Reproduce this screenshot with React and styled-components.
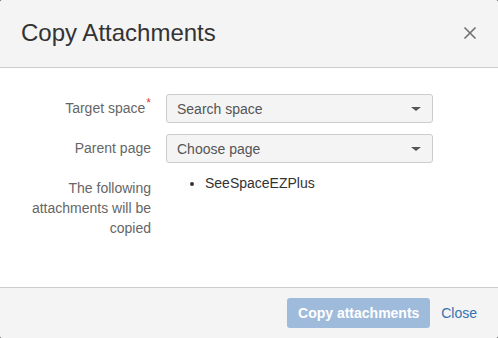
import styled, { createGlobalStyle } from "styled-components";

const GlobalStyle = createGlobalStyle`
  html, body {
    margin: 0;
    padding: 0;
    background: #707070;
  }
  body {
    font-family: "Liberation Sans", Arial, sans-serif;
  }
`;

const Dialog = styled.div`
  width: 498px;
  height: 338px;
  background: #fff;
  border-radius: 3px;
  overflow: hidden;
  display: flex;
  flex-direction: column;
`;

const Header = styled.div`
  height: 68px;
  box-sizing: border-box;
  background: #f4f4f4;
  border-bottom: 1px solid #cccccc;
  display: flex;
  align-items: center;
  justify-content: space-between;
  padding: 0 21px 2px 21px;
`;

const Title = styled.h2`
  margin: 0;
  font-size: 24px;
  font-weight: normal;
  color: #333;
`;

const CloseX = styled.button`
  border: 0;
  background: transparent;
  padding: 0;
  width: 14px;
  height: 14px;
  display: flex;
  cursor: pointer;
`;

const Body = styled.div`
  flex: 1;
  padding: 26px 21px 0 21px;
  display: flex;
  flex-direction: column;
  gap: 10px;
`;

const Row = styled.div`
  display: grid;
  grid-template-columns: 130px 267px;
  column-gap: 15px;
  align-items: start;
`;

const Label = styled.label`
  text-align: right;
  font-size: 14px;
  color: #666;
  line-height: ${(p) => (p.multi ? "20px" : "29px")};
  padding-top: ${(p) => (p.multi ? "5px" : "0")};
`;

const Req = styled.span`
  color: #d04437;
  font-size: 12px;
  position: relative;
  top: -6px;
  margin-left: 1px;
`;

const Select = styled.div`
  height: 29px;
  box-sizing: border-box;
  border: 1px solid #cccccc;
  border-radius: 3px;
  background: #f4f4f4;
  display: flex;
  align-items: center;
  justify-content: space-between;
  padding: 0 10px 0 10px;
  font-size: 14px;
  color: #555;
`;

const Caret = styled.span`
  width: 0;
  height: 0;
  border-left: 5px solid transparent;
  border-right: 5px solid transparent;
  border-top: 4px solid #555;
  margin-right: 1px;
`;

const List = styled.ul`
  margin: 0;
  padding-left: 39px;
  font-size: 14px;
  line-height: 20px;
  color: #333;
`;

const Footer = styled.div`
  height: 51px;
  box-sizing: border-box;
  background: #f4f4f4;
  border-top: 1px solid #cccccc;
  display: flex;
  align-items: center;
  justify-content: flex-end;
  gap: 11px;
  padding: 0 21px 0 0;
`;

const PrimaryBtn = styled.button`
  height: 30px;
  width: 143px;
  border: 0;
  border-radius: 3px;
  background: #9fbbdb;
  color: #fff;
  font-family: inherit;
  font-size: 14px;
  font-weight: bold;
  cursor: not-allowed;
`;

const LinkBtn = styled.a`
  font-size: 14px;
  color: #3572b0;
  text-decoration: none;
  cursor: pointer;
`;

export default function App() {
  return (
    <>
      <GlobalStyle />
      <Dialog>
        <Header>
          <Title>Copy Attachments</Title>
          <CloseX aria-label="Close">
            <svg width="14" height="14" viewBox="0 0 14 14">
              <path d="M1.5 1.5 L12.5 12.5 M12.5 1.5 L1.5 12.5" stroke="#707070" strokeWidth="1.6" fill="none" />
            </svg>
          </CloseX>
        </Header>
        <Body>
          <Row>
            <Label>
              Target space<Req>*</Req>
            </Label>
            <Select>
              Search space
              <Caret />
            </Select>
          </Row>
          <Row>
            <Label>Parent page</Label>
            <Select>
              Choose page
              <Caret />
            </Select>
          </Row>
          <Row>
            <Label multi>The following attachments will be copied</Label>
            <List>
              <li>SeeSpaceEZPlus</li>
            </List>
          </Row>
        </Body>
        <Footer>
          <PrimaryBtn disabled>Copy attachments</PrimaryBtn>
          <LinkBtn>Close</LinkBtn>
        </Footer>
      </Dialog>
    </>
  );
}
